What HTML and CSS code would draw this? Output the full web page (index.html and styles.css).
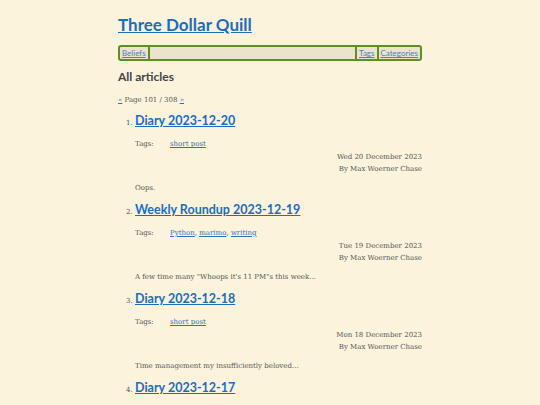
FILE: index.html
```html
<!DOCTYPE html>
<html lang="en">
<head>
<meta charset="utf-8">
<title>Three Dollar Quill</title>
<link rel="stylesheet" href="styles.css">
</head>
<body>
<div class="page">
  <header class="site-header">
    <h1 class="site-title"><a href="#">Three Dollar Quill</a></h1>
    <nav class="nav">
      <a href="#" class="nav-link">Beliefs</a>
      <span class="nav-fill"></span>
      <a href="#" class="nav-link">Tags</a>
      <a href="#" class="nav-link nav-last">Categories</a>
    </nav>
  </header>
  <main>
    <h2 class="section-title">All articles</h2>
    <p class="pager"><a href="#">«</a> Page 101 / 308 <a href="#">»</a></p>
    <ol class="articles" start="1">
      <li class="article">
        <h3 class="article-title"><a href="#">Diary 2023-12-20</a></h3>
        <div class="tags"><span class="tags-label">Tags:</span><span><a href="#">short post</a></span></div>
        <div class="meta"><div>Wed 20 December 2023</div><div>By Max Woerner Chase</div></div>
        <p class="summary">Oops.</p>
      </li>
      <li class="article">
        <h3 class="article-title"><a href="#">Weekly Roundup 2023-12-19</a></h3>
        <div class="tags"><span class="tags-label">Tags:</span><span><a href="#">Python</a>, <a href="#">marimo</a>, <a href="#">writing</a></span></div>
        <div class="meta"><div>Tue 19 December 2023</div><div>By Max Woerner Chase</div></div>
        <p class="summary">A few time many "Whoops it's 11 PM"s this week...</p>
      </li>
      <li class="article">
        <h3 class="article-title"><a href="#">Diary 2023-12-18</a></h3>
        <div class="tags"><span class="tags-label">Tags:</span><span><a href="#">short post</a></span></div>
        <div class="meta"><div>Mon 18 December 2023</div><div>By Max Woerner Chase</div></div>
        <p class="summary">Time management my insufficiently beloved...</p>
      </li>
      <li class="article">
        <h3 class="article-title"><a href="#">Diary 2023-12-17</a></h3>
      </li>
    </ol>
  </main>
</div>
</body>
</html>
```
FILE: styles.css
```css
html, body {
  margin: 0;
  padding: 0;
  background: #fbf3dc;
}
body {
  font-family: "DejaVu Serif", serif;
  font-size: 7px;
  color: #555;
}
a { color: #2a73b8; }
.page {
  width: 304px;
  margin: 0 auto;
  padding-top: 14px;
}
.site-title {
  margin: 0;
  font-family: "Lato", "Open Sans", sans-serif;
  font-weight: 700;
  font-size: 17px;
  line-height: 22px;
}
.site-title a { color: #1c6cc0; }
.nav {
  margin-top: 9px;
  display: flex;
  height: 12px;
  border: 2px solid #5f8f1f;
  border-radius: 3px;
  background: #ebe3cd;
  font-family: "Lato", "Open Sans", sans-serif;
  font-size: 8px;
  line-height: 12px;
}
.nav-link {
  padding: 0 2px;
  color: #4a7fc0;
}
.nav-link:first-child { border-right: 2px solid #5f8f1f; }
.nav-fill {
  flex: 1;
  border-right: 2px solid #5f8f1f;
}
.nav-link:nth-of-type(2) { border-right: 2px solid #5f8f1f; }
.section-title {
  margin: 8px 0 0;
  font-family: "Lato", "Open Sans", sans-serif;
  font-weight: 700;
  font-size: 12px;
  line-height: 16px;
  color: #444;
}
.pager {
  margin: 8px 0 0;
  line-height: 14px;
}
.articles {
  margin: 4px 0 0;
  padding-left: 17px;
}
.article { margin-bottom: 0; }
.article-title {
  margin: 0;
  font-family: "Lato", "Open Sans", sans-serif;
  font-weight: 700;
  font-size: 12.5px;
  line-height: 20px;
}
.article-title a { color: #1c6cc0; }
.tags {
  margin-top: 6px;
  display: flex;
  line-height: 14px;
}
.tags-label { width: 35px; }
.meta {
  text-align: right;
  line-height: 12px;
}
.summary {
  margin: 6px 0 0;
  line-height: 14px;
  padding-bottom: 5px;
}
```
